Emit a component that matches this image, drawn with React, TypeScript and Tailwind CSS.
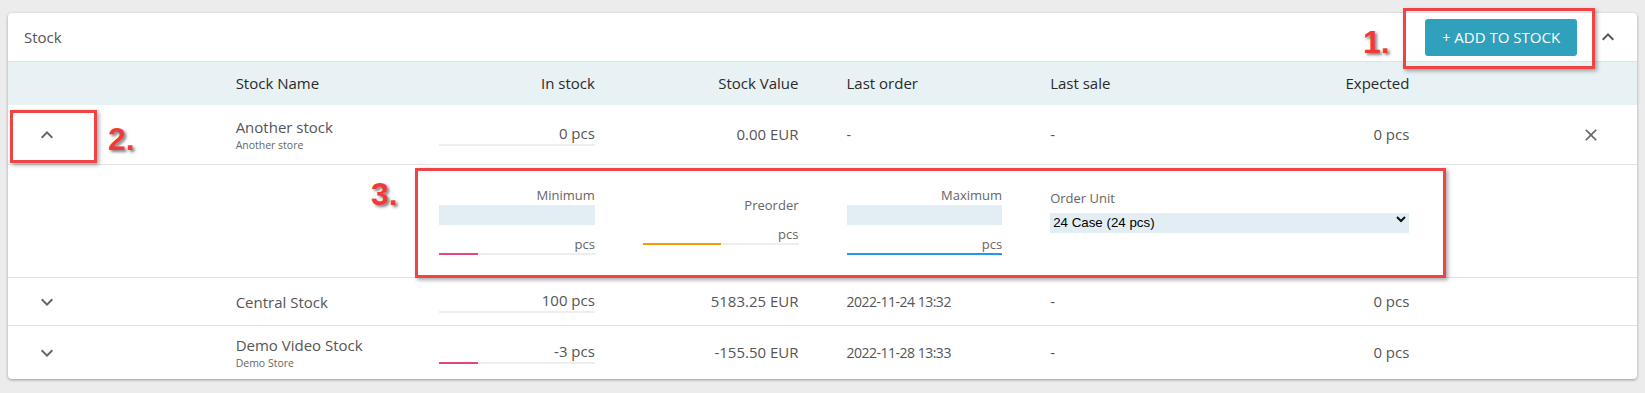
import { MdKeyboardArrowDown, MdKeyboardArrowUp, MdClose } from 'react-icons/md';

type StockRow = {
  name: string;
  store?: string;
  inStock: string;
  bar: string;
  value: string;
  lastOrder: string;
  lastSale: string;
  expected: string;
  open?: boolean;
  removable?: boolean;
  height: string;
};

const rows: StockRow[] = [
  {
    name: 'Another stock',
    store: 'Another store',
    inStock: '0 pcs',
    bar: '',
    value: '0.00 EUR',
    lastOrder: '-',
    lastSale: '-',
    expected: '0 pcs',
    open: true,
    removable: true,
    height: 'h-[60px]',
  },
  {
    name: 'Central Stock',
    inStock: '100 pcs',
    bar: '',
    value: '5183.25 EUR',
    lastOrder: '2022-11-24 13:32',
    lastSale: '-',
    expected: '0 pcs',
    height: 'h-[48px]',
  },
  {
    name: 'Demo Video Stock',
    store: 'Demo Store',
    inStock: '-3 pcs',
    bar: 'w-1/4 bg-[#e2487a]',
    value: '-155.50 EUR',
    lastOrder: '2022-11-28 13:33',
    lastSale: '-',
    expected: '0 pcs',
    height: 'h-[53px]',
  },
];

function Bar({ fill }: { fill: string }) {
  return (
    <div className="h-[2px] w-full bg-[#eeeeee]">
      {fill && <div className={`h-full ${fill}`} />}
    </div>
  );
}

function LimitField({ label, fill, input = true }: { label: string; fill: string; input?: boolean }) {
  return (
    <div className="flex flex-col text-[13px] text-[#666]">
      <div className="h-4 text-right leading-4">{label}</div>
      {input && <div className="mt-[2px] h-5 bg-[#e3eef4]" />}
      <div className={`${input ? 'mt-[11px]' : 'mt-[13px]'} h-4 text-right leading-4`}>pcs</div>
      <div className="mt-px">
        <Bar fill={fill} />
      </div>
    </div>
  );
}

function Annotation({ text, className }: { text: string; className: string }) {
  return (
    <div
      className={`absolute text-[32px] font-bold leading-none text-[#f03a3a] [font-family:'Liberation_Sans',Arial,sans-serif] [-webkit-text-stroke:6px_white] [paint-order:stroke_fill] [text-shadow:2px_2px_3px_rgba(0,0,0,0.5)] ${className}`}
    >
      {text}
    </div>
  );
}

export default function App() {
  return (
    <div className="relative min-h-[393px] bg-[#ececec] px-2 pt-[13px] pb-[15px] [font-family:'Open_Sans',sans-serif]">
      <div className="rounded-[4px] bg-white shadow-[0_1px_3px_rgba(0,0,0,0.35)]">
        <div className="flex h-[49px] items-center border-b border-[#e2e2e2] pl-4 pr-[17px]">
          <span className="flex-1 text-[15px] text-[#555]">Stock</span>
          <button className="h-[37px] w-[152px] rounded-[3px] bg-[#30a1bd] text-[15px] text-white">
            + ADD TO STOCK
          </button>
          <MdKeyboardArrowUp className="ml-[19px] text-[#555]" size={24} />
        </div>

        <div className="grid h-[43px] grid-cols-8 items-center bg-[#e8f1f4] text-[15px] text-[#2a2a2a]">
          <div />
          <div className="px-6">Stock Name</div>
          <div className="px-6 text-right">In stock</div>
          <div className="px-6 text-right">Stock Value</div>
          <div className="px-6">Last order</div>
          <div className="px-6">Last sale</div>
          <div className="px-6 text-right">Expected</div>
          <div />
        </div>

        {rows.map((row, i) => (
          <div key={row.name}>
            <div
              className={`grid ${row.height} grid-cols-8 items-center text-[15px] text-[#555] ${
                i < rows.length - 1 || row.open ? 'border-b border-[#e2e2e2]' : ''
              }`}
            >
              <div className="pl-[27px] text-[#666]">
                {row.open ? <MdKeyboardArrowUp size={24} /> : <MdKeyboardArrowDown size={24} />}
              </div>
              <div className="px-6">
                <div className="leading-5">{row.name}</div>
                {row.store && <div className="text-[10.5px] leading-4 text-[#666]">{row.store}</div>}
              </div>
              <div className="px-6">
                <div className="text-right leading-5">{row.inStock}</div>
                <div className="mt-[1px]">
                  <Bar fill={row.bar} />
                </div>
              </div>
              <div className="px-6 text-right">{row.value}</div>
              <div className="px-6 text-[14px] tracking-[-0.5px]">{row.lastOrder}</div>
              <div className="px-6">{row.lastSale}</div>
              <div className="px-6 text-right">{row.expected}</div>
              <div className="flex justify-end pr-9 text-[#666]">
                {row.removable && <MdClose size={20} />}
              </div>
            </div>

            {row.open && (
              <div className="grid h-[113px] grid-cols-8 items-center border-b border-[#e2e2e2]">
                <div />
                <div />
                <div className="px-6">
                  <LimitField label="Minimum" fill="w-1/4 bg-[#e2487a]" />
                </div>
                <div className="px-6">
                  <LimitField label="Preorder" fill="w-1/2 bg-[#f59b00]" input={false} />
                </div>
                <div className="px-6">
                  <LimitField label="Maximum" fill="w-full bg-[#2196f3]" />
                </div>
                <div className="col-span-2 self-start px-6 pt-[25px]">
                  <div className="h-4 text-[13px] leading-4 text-[#666]">Order Unit</div>
                  <div className="relative mt-[3px]">
                    <select className="h-5 w-full appearance-none bg-[#e3eef4] pl-[3px] text-[13.33px] text-black outline-none [font-family:'Liberation_Sans',Arial,sans-serif]">
                      <option>24 Case (24 pcs)</option>
                      <option>1 Piece (1 pcs)</option>
                    </select>
                    <svg
                      className="pointer-events-none absolute right-[3px] top-[6px]"
                      width="10"
                      height="8"
                      viewBox="0 0 10 8"
                    >
                      <path d="M1 2l4 4 4-4" fill="none" stroke="#111" strokeWidth="2" />
                    </svg>
                  </div>
                </div>
                <div />
              </div>
            )}
          </div>
        ))}
      </div>

      <div className="absolute left-[1403px] top-[8px] h-[61px] w-[192px] border-[3px] border-[#f04444] shadow-[2px_2px_4px_rgba(0,0,0,0.35)]" />
      <div className="absolute left-[10px] top-[110px] h-[53px] w-[87px] border-[3px] border-[#f04444] shadow-[2px_2px_4px_rgba(0,0,0,0.35)]" />
      <div className="absolute left-[415px] top-[168px] h-[110px] w-[1031px] border-[3px] border-[#f04444] shadow-[2px_2px_4px_rgba(0,0,0,0.35)]" />

      <Annotation text="1." className="left-[1363px] top-[26px]" />
      <Annotation text="2." className="left-[108px] top-[123px]" />
      <Annotation text="3." className="left-[371px] top-[178px]" />
    </div>
  );
}
